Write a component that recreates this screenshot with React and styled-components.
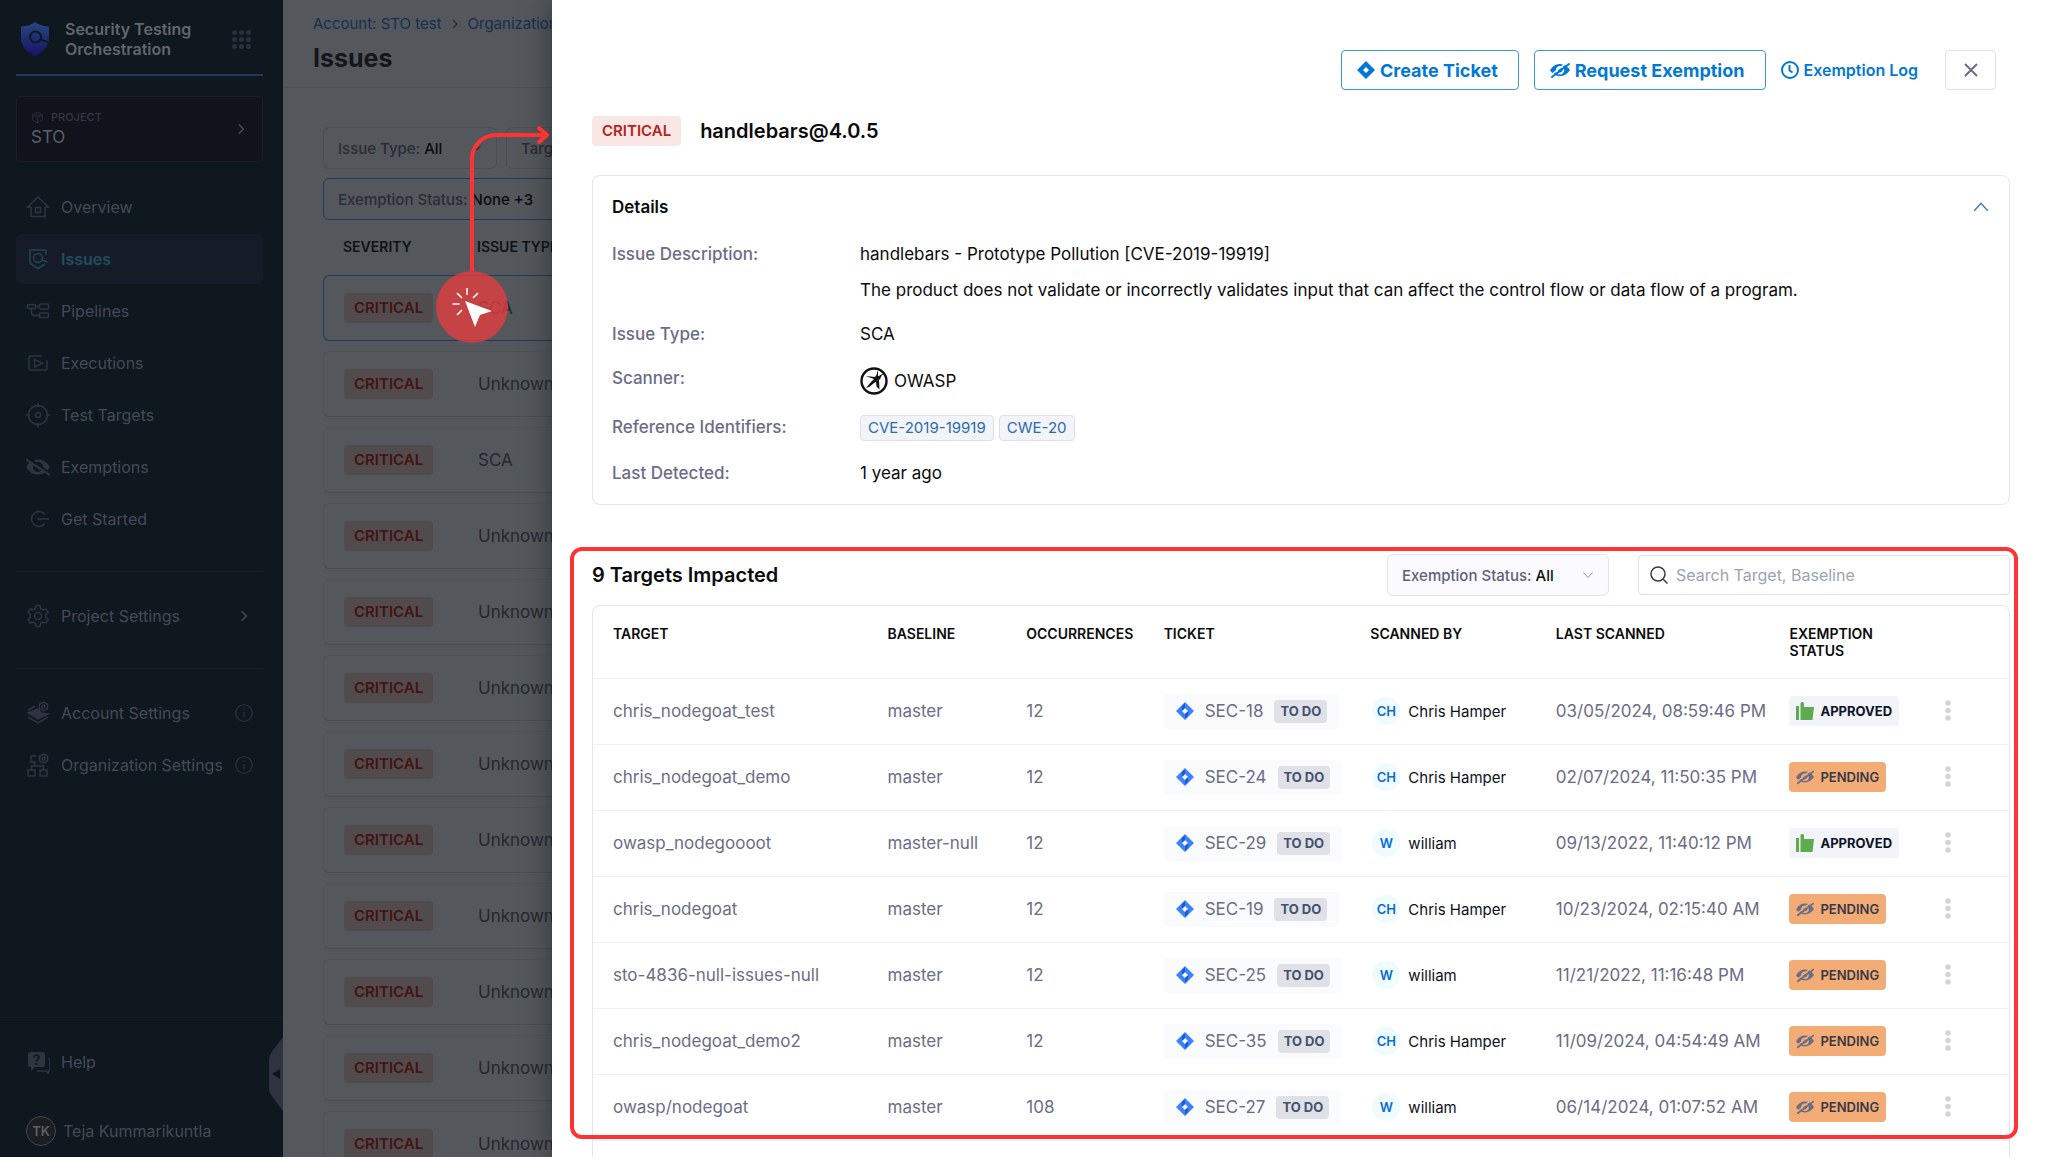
import React from 'react'
import styled, { createGlobalStyle, css } from 'styled-components'

const navItems = [
  { icon: 'home', label: 'Overview' },
  { icon: 'issues', label: 'Issues', active: true },
  { icon: 'pipelines', label: 'Pipelines' },
  { icon: 'executions', label: 'Executions' },
  { icon: 'target', label: 'Test Targets' },
  { icon: 'hidden', label: 'Exemptions' },
  { icon: 'start', label: 'Get Started' },
]

const issueTypes = ['SCA', 'Unknown', 'SCA', 'Unknown', 'Unknown', 'Unknown', 'Unknown', 'Unknown', 'Unknown', 'Unknown', 'Unknown', 'Unknown']

const targets = [
  { target: 'chris_nodegoat_test', baseline: 'master', count: 12, ticket: 'SEC-18', user: 'Chris Hamper', initials: 'CH', date: '03/05/2024, 08:59:46 PM', approved: true },
  { target: 'chris_nodegoat_demo', baseline: 'master', count: 12, ticket: 'SEC-24', user: 'Chris Hamper', initials: 'CH', date: '02/07/2024, 11:50:35 PM' },
  { target: 'owasp_nodegoooot', baseline: 'master-null', count: 12, ticket: 'SEC-29', user: 'william', initials: 'W', date: '09/13/2022, 11:40:12 PM', approved: true },
  { target: 'chris_nodegoat', baseline: 'master', count: 12, ticket: 'SEC-19', user: 'Chris Hamper', initials: 'CH', date: '10/23/2024, 02:15:40 AM' },
  { target: 'sto-4836-null-issues-null', baseline: 'master', count: 12, ticket: 'SEC-25', user: 'william', initials: 'W', date: '11/21/2022, 11:16:48 PM' },
  { target: 'chris_nodegoat_demo2', baseline: 'master', count: 12, ticket: 'SEC-35', user: 'Chris Hamper', initials: 'CH', date: '11/09/2024, 04:54:49 AM' },
  { target: 'owasp/nodegoat', baseline: 'master', count: 108, ticket: 'SEC-27', user: 'william', initials: 'W', date: '06/14/2024, 01:07:52 AM' },
]

const NavIcon = ({ name }) => (
  <LineIcon viewBox="0 0 24 24" aria-hidden="true">
    {name === 'home' && (
      <>
        <path d="M5 12v9.5h14V12M5 12H1.500L12 2l10.500 10H19" />
        <path d="M9.5 12.5h5v5h-5z" />
      </>
    )}
    {name === 'issues' && (
      <>
        <path d="M20 8V3H4v13.5l8 5 7-4.5" />
        <circle cx="12" cy="11" r="4.5" />
        <path d="m16 13 5.5 2" />
      </>
    )}
    {name === 'pipelines' && (
      <>
        <rect x="1.5" y="5.5" width="8" height="4" rx="1" />
        <rect x="13.5" y="5" width="9" height="5" rx="1" />
        <rect x="13.5" y="14" width="9" height="4.5" rx="1" />
        <path d="M9.5 7.5h4M5.5 9.5v4a3 3 0 0 0 3 3h5" />
      </>
    )}
    {name === 'executions' && (
      <>
        <path d="M16 5H4.5A1.5 1.5 0 0 0 3 6.5v11A1.5 1.5 0 0 0 4.5 19h15a1.5 1.5 0 0 0 1.5-1.5V9.5" />
        <path d="M8.5 8.5v7.5l8-3.7z" />
      </>
    )}
    {name === 'target' && (
      <>
        <circle cx="12" cy="12" r="9.5" />
        <circle cx="12" cy="12" r="2.5" />
        <path d="M12 0v4M12 20v4M0 12h4M20 12h4" />
      </>
    )}
    {name === 'start' && <path d="M19 7.5A7.5 7.5 0 1 0 19 16.5M11 12h12" />}
    {name === 'gear' && (
      <>
        <circle cx="12" cy="12" r="3.5" />
        <path d="M10 1.5h4l.7 3.2 2.2 1.3 3.1-1 2 3.5-2.4 2.2v2.6l2.4 2.2-2 3.5-3.1-1-2.2 1.3-.7 3.2h-4l-.7-3.2-2.2-1.3-3.1 1-2-3.5 2.4-2.2v-2.6L2 8.5 4 5l3.1 1 2.2-1.3z" />
      </>
    )}
    {name === 'account' && (
      <>
        <path fill="currentColor" d="m2 12 10-4 3 4 7 1-10 5z" />
        <path d="M9 5 2 9.5M2 16l10 6 10-6" />
        <circle cx="17.5" cy="5.5" r="1.5" />
        <path d="M17.5 1 21.5 3.2v4.6l-4 2.2-4-2.2V3.2z" />
      </>
    )}
    {name === 'organization' && (
      <>
        <path d="M2 17h7v6H2zM14 17h7v6h-7zM5.5 17v-4h12v4M8.5 13V9M10 9H5V3h5" />
        <circle cx="17.5" cy="5.5" r="1.5" />
        <path d="M17.5 1 21.5 3.2v4.6l-4 2.2-4-2.2V3.2z" />
      </>
    )}
    {name === 'hidden' && (
      <>
        <path fill="currentColor" stroke="none" fillRule="evenodd" d="M0 12c3-5 7-7.5 12-7.5S21 7 24 12c-3 5-7 7.5-12 7.5S3 17 0 12zm12-5a5 5 0 1 0 0 10 5 5 0 0 0 0-10zm0 2a3 3 0 0 1 3 3 3 3 0 0 1-3 3 4 4 0 0 0 0-6z" />
        <path stroke="#0f171f" strokeWidth="3" d="M1 2.5 25 19.5" />
        <path strokeWidth="2.2" d="M0 4.5 24 20" />
      </>
    )}
    {name === 'help' && (
      <>
        <path fill="currentColor" stroke="none" d="M4 2h13a2 2 0 0 1 2 2v11a2 2 0 0 1-2 2H9l-4 4v-4H4a2 2 0 0 1-2-2V4a2 2 0 0 1 2-2z" />
        <path stroke="#0f171f" strokeWidth="1.8" d="M8 7.5c0-3.5 5-3 5 0 0 2-2.5 2-2.5 4M10.5 13v2" />
        <path d="M22 9h2v12h-1.5v2.5L20 21h-9" />
      </>
    )}
    {name === 'info' && (
      <>
        <circle cx="12" cy="12" r="11" />
        <path d="M12 10.5v7M12 6v2" />
      </>
    )}
    {name === 'cube' && (
      <path d="m12 2 9 5v10l-9 5-9-5V7zM3 7l9 5 9-5M12 12v10M7.5 4.5l9 5" />
    )}
  </LineIcon>
)

const Chevron = ({ d = 'm8 4 8 8-8 8' }) => (
  <ChevronIcon viewBox="0 0 24 24" aria-hidden="true"><path d={d} /></ChevronIcon>
)

const ShieldLogo = () => (
  <svg width="28" height="34" viewBox="0 0 28 34" aria-hidden="true">
    <defs>
      <linearGradient id="shield" x1="0" y1="0" x2="0" y2="1">
        <stop offset="0" stopColor="#25487f" />
        <stop offset="1" stopColor="#191266" />
      </linearGradient>
    </defs>
    <path fill="url(#shield)" d="M14 0c4 3 8 4 14 4.5V16c0 8-6 15-14 18C6 31 0 24 0 16V4.5C6 4 10 3 14 0z" />
    <circle cx="14.5" cy="15" r="5.5" fill="none" stroke="#0f171f" strokeWidth="2" />
    <path fill="none" stroke="#0f171f" strokeWidth="2" d="m19 17.5 9 3" />
  </svg>
)

const TicketIcon = ({ color, shade }) => (
  <svg width="18" height="18" viewBox="0 0 18 18" aria-hidden="true">
    <path fill={color} fillRule="evenodd" d="M9 0l9 9-9 9-9-9zM9 6L6 9l3 3 3-3z" />
    {shade && <path fill={shade} d="M9 1.5v4.5L6.5 8.5c-1.5-2-1-5 2.5-7zM9 16.5V12l2.5-2.5c1.5 2 1 5-2.5 7z" />}
  </svg>
)

const ExemptIcon = ({ cut }) => (
  <svg width="20" height="16" viewBox="0 0 20 16" aria-hidden="true">
    <path fill="currentColor" fillRule="evenodd" d="M0 8.5C2.5 4 6 2 10 2s7.5 2 10 6c-2.5 4-6 6-10 6S2.5 12 0 8.5zM10 4a4.2 4.2 0 1 0 0 8.4A4.2 4.2 0 0 0 10 4zm0 1.8a2.4 2.4 0 1 1 0 4.8 2.4 2.4 0 0 1 0-4.8z" />
    <path stroke={cut} strokeWidth="1.5" d="M0 14 17.5 0" />
    <path stroke="currentColor" strokeWidth="2" strokeLinecap="round" d="M2 15 19 2" />
  </svg>
)

const ClockIcon = () => (
  <svg width="18" height="18" viewBox="0 0 18 18" fill="none" stroke="currentColor" strokeWidth="2" aria-hidden="true">
    <circle cx="9" cy="9" r="8" />
    <path d="M8.5 4v5.5l3 2" />
  </svg>
)

const ThumbIcon = () => (
  <svg width="18" height="18" viewBox="0 0 18 18" fill="#5fab50" aria-hidden="true">
    <path d="M0 4h3v14H0zM4.5 18V1.500c0-2 3.5-2 3.5 0V5h10l-1.5 13z" />
  </svg>
)

const OwaspIcon = () => (
  <svg width="28" height="28" viewBox="0 0 28 28" aria-hidden="true">
    <circle cx="14" cy="14" r="12.5" fill="#fff" stroke="#111" strokeWidth="2.4" />
    <path fill="#111" d="M5.500 9 15 10l2-3 1.500 2.500L22 8l-2 4-1 1 .5 9.500-3-3-.5-5L9 20l-3 1 5-6 3-3z" />
    <path stroke="#111" strokeWidth="1" d="M17.500 4.500V9M18 10l5-3" />
  </svg>
)

const DotsIcon = () => (
  <svg width="6" height="22" viewBox="0 0 6 22" fill="#d3d3de" aria-hidden="true">
    <circle cx="3" cy="3" r="2.8" />
    <circle cx="3" cy="10.5" r="2.8" />
    <circle cx="3" cy="18" r="2.8" />
  </svg>
)

const Sidebar = () => (
  <SidebarContainer>
    <SidebarBody>
      <Brand>
        <ShieldLogo />
        <BrandName>Security Testing Orchestration</BrandName>
        <GridButton type="button" aria-label="Modules">
          {Array.from({ length: 9 }, (_, i) => <span key={i} />)}
        </GridButton>
      </Brand>
      <ProjectButton type="button">
        <div>
          <ProjectLabel><NavIcon name="cube" />PROJECT</ProjectLabel>
          <ProjectName>STO</ProjectName>
        </div>
        <Chevron />
      </ProjectButton>
      <NavList>
        {navItems.map((item) => (
          <NavLink href="#" key={item.label} $active={item.active}>
            <NavIcon name={item.icon} />{item.label}
          </NavLink>
        ))}
      </NavList>
      <NavSection>
        <NavLink href="#"><NavIcon name="gear" />Project Settings<NavEnd><Chevron /></NavEnd></NavLink>
      </NavSection>
      <NavSection>
        <NavLink href="#"><NavIcon name="account" />Account Settings<NavEnd><NavIcon name="info" /></NavEnd></NavLink>
        <NavLink href="#"><NavIcon name="organization" />Organization Settings<NavEnd><NavIcon name="info" /></NavEnd></NavLink>
      </NavSection>
    </SidebarBody>
    <SidebarFooter>
      <NavLink href="#"><NavIcon name="help" />Help</NavLink>
      <UserLink href="#"><UserBadge>TK</UserBadge>Teja Kummarikuntla</UserLink>
    </SidebarFooter>
    <CollapseButton type="button" aria-label="Collapse menu">
      <svg width="14" height="74" viewBox="0 0 14 74" aria-hidden="true">
        <path fill="#2f3340" d="M14 0 2 16Q0 19 0 22V52Q0 55 2 58L14 74z" />
        <path fill="#10131c" d="M3 37l8-5v10z" />
      </svg>
    </CollapseButton>
  </SidebarContainer>
)

const IssuesPage = () => (
  <Main>
    <MainHeader>
      <Breadcrumb>
        <a href="#">Account: STO test</a><Chevron /><a href="#">Organization: default</a>
      </Breadcrumb>
      <PageTitle>Issues</PageTitle>
    </MainHeader>
    <MainBody>
      <Filters>
        <DimFilter $size="174px">
          <span>Issue Type:</span>
          <select defaultValue="All"><option>All</option></select>
          <Chevron d="m4 8 8 8 8-8" />
        </DimFilter>
        <DimFilter $size="220px">
          <span>Target:</span>
          <select defaultValue="All"><option>All</option></select>
        </DimFilter>
        <DimFilter $size="400px" $selected>
          <span>Exemption Status:</span>
          <select defaultValue="None +3"><option>None +3</option></select>
        </DimFilter>
      </Filters>
      <IssueTable>
        <thead>
          <tr><th>SEVERITY</th><th>ISSUE TYPE</th></tr>
        </thead>
        <tbody>
          {issueTypes.map((type, i) => (
            <IssueRow key={i} $selected={i === 0}>
              <td><DimSeverity>CRITICAL</DimSeverity></td>
              <td>{type}</td>
            </IssueRow>
          ))}
        </tbody>
      </IssueTable>
    </MainBody>
  </Main>
)

const IssueDrawer = () => (
  <Drawer>
    <DrawerActions>
      <OutlineButton type="button"><TicketIcon color="#0278d5" />Create Ticket</OutlineButton>
      <OutlineButton type="button"><ExemptIcon cut="#fff" />Request Exemption</OutlineButton>
      <LogLink href="#"><ClockIcon />Exemption Log</LogLink>
      <CloseButton type="button" aria-label="Close">
        <svg width="14" height="14" viewBox="0 0 14 14" stroke="#6b6d85" strokeWidth="2" aria-hidden="true">
          <path d="M1 1l12 12M13 1 1 13" />
        </svg>
      </CloseButton>
    </DrawerActions>
    <IssueTitle>
      <Severity>CRITICAL</Severity>
      <h2>handlebars@4.0.5</h2>
    </IssueTitle>

    <DetailsCard>
      <DetailsHeader>
        <h3>Details</h3>
        <button type="button" aria-label="Collapse details"><Chevron d="m3 17 9-10 9 10" /></button>
      </DetailsHeader>
      <DetailsList>
        <dt>Issue Description:</dt>
        <dd>
          <p>handlebars - Prototype Pollution [CVE-2019-19919]</p>
          <p>The product does not validate or incorrectly validates input that can affect the control flow or data flow of a program.</p>
        </dd>
        <dt>Issue Type:</dt>
        <dd>SCA</dd>
        <dt>Scanner:</dt>
        <dd><Scanner><OwaspIcon />OWASP</Scanner></dd>
        <dt>Reference Identifiers:</dt>
        <dd><References><a href="#">CVE-2019-19919</a><a href="#">CWE-20</a></References></dd>
        <dt>Last Detected:</dt>
        <dd>1 year ago</dd>
      </DetailsList>
    </DetailsCard>

    <TargetsSection>
      <TargetsHeader>
        <h2>9 Targets Impacted</h2>
        <StatusFilter>
          <span>Exemption Status:</span>
          <select defaultValue="All"><option>All</option></select>
          <Chevron d="m3 7 9 10 9-10" />
        </StatusFilter>
        <SearchBox>
          <svg width="18" height="18" viewBox="0 0 18 18" fill="none" stroke="#383946" strokeWidth="1.5" aria-hidden="true">
            <circle cx="8" cy="8" r="7" />
            <path d="m13 13 4.5 4.5" />
          </svg>
          <input type="search" aria-label="Search Target, Baseline" placeholder="Search Target, Baseline" />
        </SearchBox>
      </TargetsHeader>
      <TableCard>
        <TargetTable>
          <thead>
            <tr>
              <Th $w="20.8%">TARGET</Th>
              <Th $w="9.8%">BASELINE</Th>
              <Th $w="9.7%">OCCURRENCES</Th>
              <Th $w="14.6%">TICKET</Th>
              <Th $w="13.1%">SCANNED BY</Th>
              <Th $w="16.5%">LAST SCANNED</Th>
              <Th $w="11%">EXEMPTION<br />STATUS</Th>
              <Th aria-label="Actions" />
            </tr>
          </thead>
          <tbody>
            {targets.map((row) => (
              <tr key={row.target}>
                <td>{row.target}</td>
                <td>{row.baseline}</td>
                <td>{row.count}</td>
                <td>
                  <TicketChip><TicketIcon color="#3b82fb" shade="#1d5bd0" />{row.ticket}<TicketState>TO DO</TicketState></TicketChip>
                </td>
                <td><Person><Avatar>{row.initials}</Avatar>{row.user}</Person></td>
                <td>{row.date}</td>
                <td>
                  {row.approved
                    ? <Status $approved><ThumbIcon />APPROVED</Status>
                    : <Status><ExemptIcon cut="#f4ac76" />PENDING</Status>}
                </td>
                <td><MenuButton type="button" aria-label="More actions"><DotsIcon /></MenuButton></td>
              </tr>
            ))}
          </tbody>
        </TargetTable>
      </TableCard>
      <Highlight />
    </TargetsSection>
  </Drawer>
)

const ClickPointer = () => (
  <Pointer viewBox="0 0 120 232" fill="none" aria-hidden="true">
    <path stroke="#ff3333" strokeWidth="4" d="M38 160V48a24 24 0 0 1 24-24h50" />
    <path stroke="#ff3333" strokeWidth="4" strokeLinecap="round" strokeLinejoin="round" d="m105 17 8 7-8 7" />
    <circle cx="38" cy="196" r="36" fill="#e53c3f" fillOpacity=".78" />
    <path fill="#fff" d="m31 190 27 10-12 4-5 12z" />
    <path stroke="#fff" strokeWidth="1.5" d="M33 177v7M23 182l5 5M44 182l-5 5M18.5 193h7M28 199l-5 5" />
  </Pointer>
)

const App = () => (
  <>
    <GlobalStyle />
    <Shell>
      <Sidebar />
      <IssuesPage />
      <IssueDrawer />
      <ClickPointer />
    </Shell>
  </>
)

export default App

const GlobalStyle = createGlobalStyle`
    * {
        box-sizing: border-box;
    }

    body {
        margin: 0;
        background-color: #fff;
        font-family: Inter, "Liberation Sans", sans-serif;
        font-size: 17px;
        color: #0b0b0d;
    }

    h1, h2, h3, p, dl, dd {
        margin: 0;
    }

    a {
        color: inherit;
        text-decoration: none;
    }

    button, input, select {
        font: inherit;
        color: inherit;
        margin: 0;
        padding: 0;
        border: none;
        background: none;
        outline: none;
    }

    button {
        cursor: pointer;
    }

    select {
        appearance: none;
        min-width: 0;
        flex: 1;
        color: #0b0b0d;
    }
`

const Shell = styled.div`
    position: relative;
    display: flex;
    height: calc(100vh - 6px);
    overflow: hidden;
    background-color: #54575b;
`

const LineIcon = styled.svg`
    width: 24px;
    height: 24px;
    flex-shrink: 0;
    fill: none;
    stroke: currentColor;
    stroke-width: 1.5;
    color: #303440;
`

const ChevronIcon = styled.svg`
    width: 14px;
    height: 14px;
    flex-shrink: 0;
    fill: none;
    stroke: currentColor;
    stroke-width: 2.5;
`

const SidebarContainer = styled.aside`
    position: relative;
    display: flex;
    flex-direction: column;
    width: 283px;
    flex-shrink: 0;
    background-color: #0f171f;
    font-size: 16px;
    color: #464a56;
`

const SidebarBody = styled.div`
    padding: 0 20px 0 16px;
`

const Brand = styled.div`
    display: flex;
    align-items: center;
    height: 76px;
    padding: 4px 12px 0 5px;
    border-bottom: 2px solid #21395b;
`

const BrandName = styled.div`
    flex: 1;
    margin-left: 16px;
    line-height: 20px;
    font-weight: 600;
    color: #62676c;
`

const GridButton = styled.button`
    display: grid;
    grid-template-columns: repeat(3, 5px);
    gap: 2px;

    span {
        height: 5px;
        border-radius: 50%;
        background-color: #2c303b;
    }
`

const ProjectButton = styled.button`
    display: flex;
    align-items: center;
    justify-content: space-between;
    width: 100%;
    height: 66px;
    margin-top: 20px;
    padding: 0 14px 0 14px;
    border: 1px solid #1d1f27;
    border-radius: 4px;
    background-color: #10131b;
    text-align: left;
`

const ProjectLabel = styled.div`
    display: flex;
    align-items: center;
    gap: 7px;
    font-size: 11px;
    line-height: 16px;
    font-weight: 500;
    color: #353943;

    svg {
        width: 13px;
        height: 13px;
    }
`

const ProjectName = styled.div`
    font-size: 17px;
    line-height: 24px;
    color: #5c6068;
`

const NavList = styled.nav`
    display: grid;
    gap: 2px;
    margin-top: 20px;
`

const NavSection = styled.nav`
    display: grid;
    gap: 2px;
    margin-top: 27px;
    padding-top: 19px;
    border-top: 1px solid #1b1e27;
`

const NavLink = styled.a`
    display: flex;
    align-items: center;
    gap: 11px;
    height: 50px;
    padding: 0 10px;
    border-radius: 6px;
    white-space: nowrap;

    ${({ $active }) => $active && css`
        background-color: #151c28;
        color: #234c5f;
        font-weight: 600;

        svg {
            color: #1f4657;
        }
    `}
`

const NavEnd = styled.span`
    display: flex;
    justify-content: center;
    width: 18px;
    margin-left: auto;

    ${LineIcon} {
        width: 18px;
        height: 18px;
    }
`

const SidebarFooter = styled.nav`
    display: grid;
    gap: 19px;
    margin-top: auto;
    padding: 19px 20px 1px 16px;
    border-top: 1px solid #171b24;
`

const UserLink = styled(NavLink)`
    gap: 7px;
`

const UserBadge = styled.span`
    display: grid;
    place-items: center;
    width: 30px;
    height: 30px;
    border: 1px solid #44474c;
    border-radius: 50%;
    background-color: #1b1f24;
    font-size: 13px;
    font-weight: 600;
    color: #5d6063;
`

const CollapseButton = styled.button`
    position: absolute;
    right: 0;
    bottom: 46px;
    height: 74px;

    svg {
        display: block;
    }
`

const Main = styled.main`
    flex: 1;
    min-width: 0;
`

const MainHeader = styled.header`
    height: 88px;
    padding: 14px 30px 0;
    border-bottom: 1px solid #4b4e53;
`

const Breadcrumb = styled.nav`
    display: flex;
    align-items: center;
    gap: 7px;
    font-size: 15px;
    line-height: 20px;
    color: #162f50;
    white-space: nowrap;

    svg {
        width: 12px;
        height: 12px;
        color: #26282d;
    }
`

const PageTitle = styled.h1`
    margin-top: 8px;
    font-size: 25px;
    line-height: 32px;
    font-weight: 700;
    color: #14161a;
`

const MainBody = styled.div`
    padding: 39px 40px 0;
`

const Filters = styled.div`
    display: flex;
    flex-wrap: wrap;
    gap: 9px;
    width: 420px;
`

const DimFilter = styled.label`
    display: flex;
    align-items: center;
    gap: 4px;
    width: ${({ $size }) => $size};
    height: 42px;
    padding: 0 14px;
    border: 1px solid ${({ $selected }) => ($selected ? '#1f3c5c' : '#4b4e53')};
    border-radius: 6px;
    font-size: 15px;
    font-weight: 500;
    color: #2a2c36;
    white-space: nowrap;

    svg {
        width: 10px;
        height: 10px;
    }
`

const IssueTable = styled.table`
    width: 100%;
    table-layout: fixed;
    border-collapse: separate;
    border-spacing: 0 10px;

    th {
        height: 35px;
        padding: 0 20px 3px;
        font-size: 14px;
        font-weight: 600;
        text-align: left;
        color: #101216;
    }

    th:first-child {
        width: 135px;
    }

    th + th {
        padding-left: 19px;
    }
`

const IssueRow = styled.tr`
    td {
        height: 66px;
        padding: 0 20px;
        border: solid ${({ $selected }) => ($selected ? '#1f3c5c' : '#505357')};
        border-width: 1px 0;
        border-bottom-color: ${({ $selected }) => ($selected ? '#1f3c5c' : '#484b50')};
        color: #25272f;
    }

    td:first-child {
        border-left-width: 1px;
        border-radius: 6px 0 0 6px;
    }
`

const Severity = styled.span`
    display: inline-block;
    padding: 0 10px;
    border-radius: 4px;
    background-color: #f9e7e5;
    font-size: 15px;
    line-height: 30px;
    font-weight: 600;
    color: #b0261c;
`

const DimSeverity = styled(Severity)`
    background-color: #524b4d;
    color: #421412;
`

const Drawer = styled.section`
    position: absolute;
    top: 0;
    bottom: 0;
    left: 552px;
    right: 0;
    padding: 50px 38px 0 40px;
    background-color: #fff;
    box-shadow: 0 0 26px rgba(16, 22, 26, .5);
`

const DrawerActions = styled.div`
    display: flex;
    justify-content: flex-end;
    align-items: center;
    gap: 15px;
    height: 40px;
    padding-right: 14px;
`

const OutlineButton = styled.button`
    display: flex;
    align-items: center;
    gap: 5px;
    height: 40px;
    padding: 0 20px 0 15px;
    border: 1px solid #3c95e0;
    border-radius: 4px;
    font-size: 18px;
    font-weight: 700;
    color: #0278d5;
`

const LogLink = styled.a`
    display: flex;
    align-items: center;
    gap: 5px;
    margin-right: 12px;
    font-size: 16px;
    font-weight: 600;
    color: #0278d5;
`

const CloseButton = styled.button`
    display: grid;
    place-items: center;
    width: 51px;
    height: 40px;
    border: 1px solid #e0e0e8;
    border-radius: 4px;
`

const IssueTitle = styled.header`
    display: flex;
    align-items: center;
    gap: 19px;
    margin-top: 26px;

    h2 {
        font-size: 20px;
        line-height: 30px;
        font-weight: 600;
    }
`

const DetailsCard = styled.section`
    margin-top: 29px;
    padding: 19px;
    border: 1px solid #e4e4ee;
    border-radius: 8px;
`

const DetailsHeader = styled.div`
    display: flex;
    justify-content: space-between;
    align-items: center;

    h3 {
        font-size: 17px;
        line-height: 24px;
        font-weight: 600;
    }

    svg {
        display: block;
        width: 18px;
        height: 18px;
        color: #3b7fd0;
        stroke-width: 2;
    }
`

const DetailsList = styled.dl`
    display: grid;
    grid-template-columns: 248px 1fr;
    row-gap: 20px;
    margin-top: 23px;
    line-height: 24px;

    dt {
        font-weight: 500;
        color: #6b6d85;
    }

    p + p {
        margin-top: 12px;
    }
`

const Scanner = styled.div`
    display: flex;
    align-items: center;
    gap: 6px;
    height: 29px;
`

const References = styled.div`
    display: flex;
    gap: 5px;

    a {
        padding: 0 7px;
        border: 1px solid #dfdfea;
        border-radius: 4px;
        background-color: #f3f3fa;
        font-size: 15px;
        line-height: 24px;
        color: #2a6cab;
    }
`

const TargetsSection = styled.section`
    position: relative;
    margin-top: 49px;
`

const TargetsHeader = styled.div`
    display: flex;
    align-items: center;

    h2 {
        flex: 1;
        font-size: 20px;
        line-height: 28px;
        font-weight: 600;
    }
`

const StatusFilter = styled.label`
    display: flex;
    align-items: center;
    gap: 4px;
    width: 222px;
    height: 42px;
    padding: 0 14px;
    border: 1px solid #e2e2ec;
    border-radius: 6px;
    background-color: #fbfbff;
    font-size: 15px;
    font-weight: 500;
    color: #5e6078;

    svg {
        width: 12px;
        height: 12px;
        color: #8f91a5;
        stroke-width: 2;
    }
`

const SearchBox = styled.div`
    display: flex;
    align-items: center;
    gap: 8px;
    width: 372px;
    height: 40px;
    margin-left: 29px;
    padding: 0 11px;
    border: 1px solid #dedfea;
    border-radius: 4px;

    input {
        flex: 1;
        min-width: 0;
        font-size: 16px;
    }

    input::placeholder {
        color: #9ba3b1;
        opacity: 1;
    }
`

const TableCard = styled.div`
    margin-top: 9px;
    border: 1px solid #e4e4ee;
    border-radius: 8px;
    min-height: 600px;
`

const TargetTable = styled.table`
    width: 100%;
    table-layout: fixed;
    border-collapse: collapse;

    td {
        height: 66px;
        padding: 0;
        border-bottom: 1px solid #efeff6;
        color: #6b6d85;
        white-space: nowrap;
    }

    th:first-child, td:first-child {
        padding-left: 20px;
    }
`

const Th = styled.th`
    width: ${({ $w }) => $w || 'auto'};
    height: 72px;
    padding: 19px 0 0;
    border-bottom: 1px solid #efeff6;
    vertical-align: top;
    font-size: 14px;
    line-height: 17px;
    font-weight: 600;
    text-align: left;
`

const TicketChip = styled.span`
    display: inline-flex;
    align-items: center;
    gap: 11px;
    height: 35px;
    padding: 0 12px;
    border-radius: 4px;
    background-color: #fafbfd;
`

const TicketState = styled.span`
    padding: 0 6px;
    border-radius: 4px;
    background-color: #dfe1e6;
    font-size: 13px;
    line-height: 23px;
    font-weight: 700;
    color: #42526e;
`

const Person = styled.span`
    display: inline-flex;
    align-items: center;
    gap: 8px;
    padding-left: 2px;
    font-size: 15px;
    color: #0b1020;
`

const Avatar = styled.span`
    display: grid;
    place-items: center;
    width: 28px;
    height: 28px;
    border-radius: 50%;
    background-color: #effbff;
    font-size: 13px;
    font-weight: 600;
    color: #0b6fd0;
`

const Status = styled.span`
    display: inline-flex;
    align-items: center;
    gap: 6px;
    height: 30px;
    padding: 0 7px;
    border-radius: 4px;
    background-color: ${({ $approved }) => ($approved ? '#f3f3fa' : '#f4ac76')};
    font-size: 13px;
    font-weight: ${({ $approved }) => ($approved ? 700 : 600)};
    color: ${({ $approved }) => ($approved ? '#0b1526' : '#383946')};

    svg {
        width: 18px;
        color: #6b6d85;
    }
`

const MenuButton = styled.button`
    display: block;

    svg {
        display: block;
    }
`

// red frame drawn over the targets list
const Highlight = styled.div`
    position: absolute;
    top: -7px;
    left: -22px;
    right: -8px;
    height: 592px;
    border: 4px solid #ff3333;
    border-radius: 12px;
    pointer-events: none;
`

const Pointer = styled.svg`
    position: absolute;
    top: 111px;
    left: 434px;
    width: 120px;
    height: 232px;
    pointer-events: none;
`
